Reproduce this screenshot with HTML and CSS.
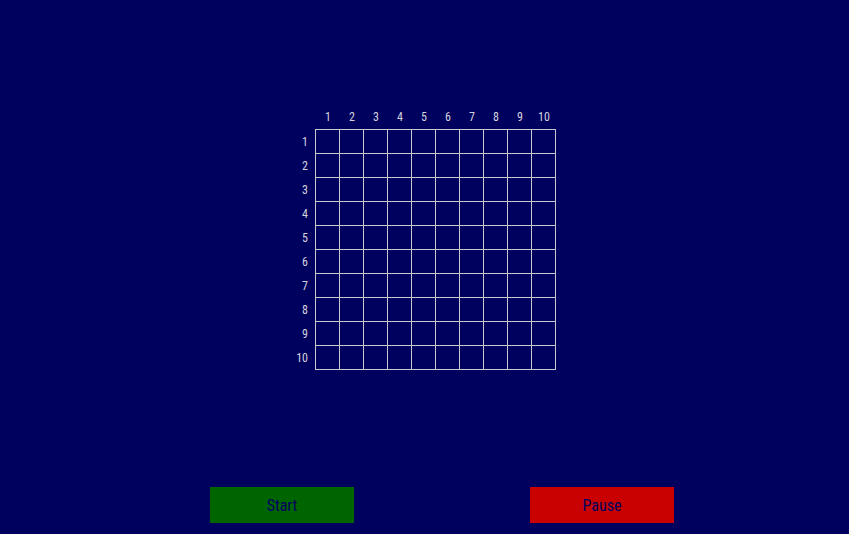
FILE: index.html
```html
<!DOCTYPE html>
<html>
<head>
<meta charset="utf-8">
<link rel="stylesheet" href="styles.css">
</head>
<body>
<div class="page">
  <div class="board">
    <div class="corner"></div>
    <div class="col-labels">
      <span>1</span><span>2</span><span>3</span><span>4</span><span>5</span><span>6</span><span>7</span><span>8</span><span>9</span><span>10</span>
    </div>
    <div class="row-labels">
      <span>1</span><span>2</span><span>3</span><span>4</span><span>5</span><span>6</span><span>7</span><span>8</span><span>9</span><span>10</span>
    </div>
    <div class="cells" id="cells"></div>
  </div>
  <div class="controls">
    <button class="btn start">Start</button>
    <button class="btn pause">Pause</button>
  </div>
</div>
<script src="script.js"></script>
</body>
</html>
```

FILE: script.js
```js
var c = document.getElementById('cells');
for (var i = 0; i < 100; i++) {
  var d = document.createElement('div');
  d.className = 'cell';
  c.appendChild(d);
}
```

FILE: styles.css
```css
html, body {
  margin: 0;
  padding: 0;
  background: #00005f;
  height: 100%;
}
.page {
  width: 849px;
  height: 534px;
  font-family: "Liberation Sans Narrow", "Roboto Condensed", "DejaVu Sans Condensed", sans-serif;
  color: #d4d4dc;
  display: flex;
  flex-direction: column;
}
.board {
  margin: 105px 0 0 295px;
  display: grid;
  grid-template-columns: 20px 241px;
  grid-template-rows: 24px 241px;
}
.col-labels {
  display: grid;
  grid-template-columns: repeat(10, 24px);
  padding-left: 1px;
  font-size: 12px;
}
.col-labels span {
  display: flex;
  align-items: center;
  justify-content: center;
}
.row-labels {
  display: grid;
  grid-template-rows: repeat(10, 24px);
  padding-top: 1px;
  font-size: 12px;
}
.row-labels span {
  display: flex;
  align-items: center;
  justify-content: flex-end;
  padding-right: 7px;
}
.cells {
  display: grid;
  grid-template-columns: repeat(10, 23px);
  grid-template-rows: repeat(10, 23px);
  gap: 1px;
  padding: 1px;
  background: #c8c8cc;
}
.cell {
  background: #00005f;
}
.controls {
  margin: 117px 0 0 210px;
  display: flex;
  gap: 176px;
}
.btn {
  width: 144px;
  height: 36px;
  border: none;
  padding: 0;
  font-family: "Liberation Sans Narrow", "Roboto Condensed", "DejaVu Sans Condensed", sans-serif;
  font-size: 16px;
  color: #00005f;
}
.start { background: #006400; }
.pause { background: #c80000; }
```
